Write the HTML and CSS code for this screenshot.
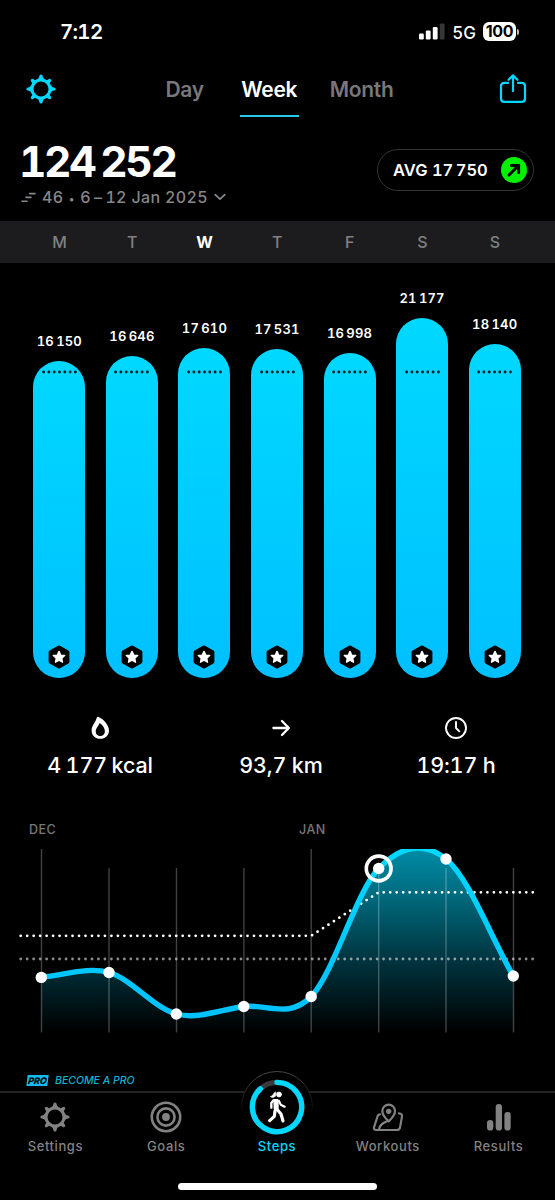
FILE: index.html
```html
<!DOCTYPE html>
<html lang="en">
<head>
<meta charset="utf-8">
<title>Steps</title>
<link rel="stylesheet" href="styles.css">
</head>

<body>

<!-- shared icons -->
<svg class="defs" width="0" height="0">
	<symbol id="gear" viewBox="-15 -15 30 30">
		<circle r="9" fill="none" stroke="currentColor" stroke-width="3"/>
		<g fill="currentColor">
			<path id="tooth" d="M-4.4-9.3Q-1.7-10.6-1.6-13A1.6 1.6 0 0 1 1.6-13Q1.7-10.6 4.4-9.3Z"/>
			<use href="#tooth" transform="rotate(45) translate(0 .8)"/>
			<use href="#tooth" transform="rotate(90)"/>
			<use href="#tooth" transform="rotate(135) translate(0 .8)"/>
			<use href="#tooth" transform="rotate(180)"/>
			<use href="#tooth" transform="rotate(225) translate(0 .8)"/>
			<use href="#tooth" transform="rotate(270)"/>
			<use href="#tooth" transform="rotate(315) translate(0 .8)"/>
		</g>
	</symbol>
	<symbol id="star" viewBox="0 0 22 24">
		<path d="M11 2.5L19.4 7.2V16.8L11 21.5L2.6 16.8V7.2Z" fill="#000" stroke="#000" stroke-width="4" stroke-linejoin="round"/>
		<path d="M11 6.4L12.7 10.1L16.7 10.5L13.7 13.2L14.5 17.2L11 15.2L7.5 17.2L8.3 13.2L5.3 10.5L9.3 10.1Z" fill="#fff" stroke="#fff" stroke-width="1.4" stroke-linejoin="round"/>
	</symbol>
	<symbol id="goal" viewBox="0 0 35 4">
		<path d="M1.6 2H34" fill="none" stroke="#02202b" stroke-width="2.9" stroke-linecap="round" stroke-dasharray="0 5.3"/>
	</symbol>
</svg>

<div class="status">
	<span class="clock">7:12</span>
	<div class="signal">
		<svg width="26" height="17" fill="#fff">
			<rect x="0" y="10.5" width="4.8" height="6" rx="1.2"/>
			<rect x="6.8" y="7.5" width="4.8" height="9" rx="1.2"/>
			<rect x="13.8" y="4" width="4.8" height="12.5" rx="1.2"/>
			<rect x="20.8" y="0.5" width="4.8" height="16" rx="1.2" fill="#363636"/>
		</svg>
		<span class="net">5G</span>
		<span class="battery">100</span>
		<i class="nub"></i>
	</div>
</div>

<div class="header">
	<svg class="blue" width="30" height="30"><use href="#gear"/></svg>
	<div class="tabs">
		<a class="tab day">Day</a>
		<a class="tab week active">Week</a>
		<a class="tab month">Month</a>
	</div>
	<svg class="blue" width="28" height="30" viewBox="0 0 28 30" fill="none" stroke="currentColor" stroke-width="2.2" stroke-linecap="round" stroke-linejoin="round">
		<path d="M9 8.9H5.4Q2 8.9 2 12.3V24.4Q2 27.8 5.4 27.8H22.6Q26 27.8 26 24.4V12.3Q26 8.9 22.6 8.9H19"/>
		<path d="M14 17V2M9.6 5.8L14 1.4L18.4 5.8"/>
	</svg>
</div>

<div class="summary">
	<div>
		<h1>124 252</h1>
		<div class="range">
			<svg width="15" height="11" viewBox="0 0 15 11" fill="none" stroke="currentColor" stroke-width="1.6" stroke-linecap="round"><path d="M8.6 1.6H14M5 5.4H10M1 9.2H6"/></svg>
			<span>46 <b>•</b> 6<i>–</i>12 Jan 2025</span>
			<svg width="12" height="8" viewBox="0 0 12 8" fill="none" stroke="currentColor" stroke-width="1.8" stroke-linecap="round" stroke-linejoin="round"><path d="M1.2 1.6L6 6.2L10.8 1.6"/></svg>
		</div>
	</div>
	<div class="avg">
		<span>AVG <em>17 750</em></span>
		<svg width="26" height="26" viewBox="0 0 26 26">
			<circle cx="13" cy="13" r="13" fill="#00f000"/>
			<path d="M8 18L17 9M10.4 8.6H17.6V15.6" fill="none" stroke="#000" stroke-width="3" stroke-linecap="round"/>
		</svg>
	</div>
</div>

<div class="days">
	<span>M</span><span>T</span><span class="today">W</span><span>T</span><span>F</span><span>S</span><span>S</span>
</div>

<div class="bars">
	<div class="col"><span>16 150</span><div class="bar" style="height: 317.5px"><svg class="goal"><use href="#goal"/></svg><svg class="star"><use href="#star"/></svg></div></div>
	<div class="col"><span>16 646</span><div class="bar" style="height: 322px"><svg class="goal"><use href="#goal"/></svg><svg class="star"><use href="#star"/></svg></div></div>
	<div class="col"><span>17 610</span><div class="bar" style="height: 330px"><svg class="goal"><use href="#goal"/></svg><svg class="star"><use href="#star"/></svg></div></div>
	<div class="col"><span>17 531</span><div class="bar" style="height: 329px"><svg class="goal"><use href="#goal"/></svg><svg class="star"><use href="#star"/></svg></div></div>
	<div class="col"><span>16 998</span><div class="bar" style="height: 325px"><svg class="goal"><use href="#goal"/></svg><svg class="star"><use href="#star"/></svg></div></div>
	<div class="col"><span>21 177</span><div class="bar" style="height: 360.5px"><svg class="goal"><use href="#goal"/></svg><svg class="star"><use href="#star"/></svg></div></div>
	<div class="col"><span>18 140</span><div class="bar" style="height: 334.5px"><svg class="goal"><use href="#goal"/></svg><svg class="star"><use href="#star"/></svg></div></div>
</div>

<div class="stats">
	<div class="stat">
		<svg width="24" height="24" viewBox="0 0 24 24"><path fill="#fff" fill-rule="evenodd" d="M10.6 .9C15 2.8 21 8.5 21 14.5C21 19.5 17.2 22.8 12.3 22.8C7.3 22.8 3.6 19.4 3.6 14.4C3.6 9.8 7.2 7 8.6 2.3C9 1 9.5 .5 10.6 .9ZM11.5 7C10.6 10.3 7.7 12.1 7.7 15.5C7.7 18.3 9.7 20.1 12.3 20.1C14.9 20.1 16.9 18.2 16.9 15.5C16.9 11.9 14.3 8.9 11.5 7Z"/></svg>
		<span class="kcal">4 177 kcal</span>
	</div>
	<div class="stat">
		<svg width="24" height="24" viewBox="0 0 24 24" fill="none" stroke="#fff" stroke-width="2.3" stroke-linecap="round" stroke-linejoin="round"><path d="M4.4 12H19.6M13 5L19.8 12L13 19"/></svg>
		<span>93,7 km</span>
	</div>
	<div class="stat">
		<svg width="24" height="24" viewBox="0 0 24 24" fill="none" stroke="#fff" stroke-width="1.9" stroke-linecap="round" stroke-linejoin="round"><circle cx="12" cy="12" r="10"/><path d="M12 6V12L15.3 15.3"/></svg>
		<span>19:17 h</span>
	</div>
</div>

<div class="trend">
	<svg width="555" height="240" viewBox="0 0 555 240" fill="none">
		<defs>
			<linearGradient id="area" gradientUnits="userSpaceOnUse" x1="0" y1="39" x2="0" y2="222">
				<stop offset="0" stop-color="#008ca6"/>
				<stop offset=".25" stop-color="#006b7e"/>
				<stop offset=".6" stop-color="#003540"/>
				<stop offset="1" stop-color="#000"/>
			</linearGradient>
			<linearGradient id="line" gradientUnits="userSpaceOnUse" x1="0" y1="39" x2="0" y2="222">
				<stop offset="0" stop-color="#00d8ff"/>
				<stop offset="1" stop-color="#00bfff"/>
			</linearGradient>
			<clipPath id="plot"><rect x="0" y="39" width="555" height="184"/></clipPath>
		</defs>
		<text class="month-label" x="29" y="24">DEC</text>
		<text class="month-label" x="299" y="24">JAN</text>
		<path clip-path="url(#plot)" fill="url(#area)" d="M41.3 167C63.8 165.5 86.5 156.3 109 162.5C131.4 168.7 153.9 198.3 176.3 204C198.8 209.7 221.3 199.4 243.8 196.5C266.3 193.6 288.7 209.5 311.2 186.5C333.7 163.5 356.2 81.4 378.7 58.5C401.2 35.6 423.6 31.1 446 49C468.4 66.9 490.9 127 513.3 166V222H41.3Z"/>
		<path stroke="#fff" stroke-opacity=".25" stroke-width="1.4" d="M41.5 39V222.5M109 58V222.5M176.5 58V222.5M243.9 58V222.5M311.2 39V222.5M378.7 58V222.5M446 58V222.5M513.5 58V222.5"/>
		<path stroke="#fff" stroke-width="2.8" stroke-linecap="round" stroke-dasharray="0 6.48" d="M20.7 125.8H311.2L378.7 82.3H535"/>
		<path stroke="#fff" stroke-opacity=".55" stroke-width="2.8" stroke-linecap="round" stroke-dasharray="0 6.48" d="M20.7 149H535"/>
		<path clip-path="url(#plot)" stroke="url(#line)" stroke-width="5.4" d="M41.3 167C63.8 165.5 86.5 156.3 109 162.5C131.4 168.7 153.9 198.3 176.3 204C198.8 209.7 221.3 199.4 243.8 196.5C266.3 193.6 288.7 209.5 311.2 186.5C333.7 163.5 356.2 81.4 378.7 58.5C401.2 35.6 423.6 31.1 446 49C468.4 66.9 490.9 127 513.3 166"/>
		<g fill="#fff">
			<circle cx="41.3" cy="167.4" r="5.7"/>
			<circle cx="109" cy="162.5" r="5.7"/>
			<circle cx="176.3" cy="204" r="5.7"/>
			<circle cx="243.8" cy="196.5" r="5.7"/>
			<circle cx="311.2" cy="186.5" r="5.7"/>
			<circle cx="378.7" cy="58.5" r="5.7"/>
			<circle cx="446" cy="49" r="5.7"/>
			<circle cx="513.3" cy="166" r="5.7"/>
		</g>
		<circle cx="378.7" cy="58.5" r="12.4" stroke="#fff" stroke-width="3.6"/>
	</svg>
</div>

<div class="pro">
	<span class="badge">PRO</span>
	<span>BECOME A PRO</span>
</div>

<div class="nav">
	<a>
		<svg width="30" height="30"><use href="#gear"/></svg>
		<span>Settings</span>
	</a>
	<a>
		<svg width="32" height="32" viewBox="-16 -16 32 32" fill="none" stroke="currentColor" stroke-width="2.6">
			<circle r="14.2"/><circle r="8.6"/><circle r="3.9" fill="currentColor" stroke="none"/>
		</svg>
		<span>Goals</span>
	</a>
	<a class="active">
		<svg class="steps" width="72" height="72" viewBox="33 31 216 216" fill="none">
			<defs>
				<linearGradient id="fade" x1="0" y1="0" x2="0" y2="1">
					<stop offset="0" stop-color="#4a4648"/>
					<stop offset=".6" stop-color="#000"/>
				</linearGradient>
			</defs>
			<circle cx="141" cy="139" r="106.5" fill="#000" stroke="url(#fade)" stroke-width="3"/>
			<circle cx="141" cy="139" r="74" stroke="#3a3a3c" stroke-width="16"/>
			<path d="M141 65A74 74 0 1 1 91 84.5" stroke="currentColor" stroke-width="16" stroke-linecap="round"/>
			<g stroke="#fff" stroke-linecap="round" stroke-linejoin="round">
				<circle cx="147" cy="101.5" r="7.5" fill="#fff" stroke-width="2"/>
				<path d="M136 94Q132 96 129 102Q126 107 121 108Q130 113 136 107L138 100Z" fill="#fff" stroke-width="2"/>
				<path d="M134 119L142 119L142 145L135 145Z" fill="#fff" stroke-width="8"/>
				<path d="M130 119L124 127V141" stroke-width="7"/>
				<path d="M147 121L152 132L164 138" stroke-width="6.5"/>
				<path d="M142 147L153 160L159 181" stroke-width="9.5"/>
				<path d="M135 151L133 167L119 180" stroke-width="9.5"/>
			</g>
		</svg>
		<span>Steps</span>
	</a>
	<a>
		<svg width="32" height="30" viewBox="427 124 96 90" fill="none" stroke="currentColor" stroke-width="6.5" stroke-linecap="round" stroke-linejoin="round">
			<path d="M477 182C467 173 458 162 458 151A19 19 0 0 1 496 151C496 162 487 173 477 182Z"/>
			<circle cx="477" cy="152" r="8" fill="currentColor" stroke="none"/>
			<path d="M451 161Q446 161 444 166L433 200Q431 208 440 208H502Q509 208 511 201L517 167Q518 159 508 158M448 206C450 192 461 187 472 182"/>
		</svg>
		<span>Workouts</span>
	</a>
	<a>
		<svg width="24" height="28" viewBox="0 0 24 28" fill="currentColor">
			<rect x="0" y="17" width="6.3" height="10.5" rx="3.1"/>
			<rect x="8.7" y="1" width="6.3" height="26.5" rx="3.1"/>
			<rect x="17.4" y="9" width="6.3" height="18.5" rx="3.1"/>
		</svg>
		<span>Results</span>
	</a>
</div>

<div class="home"></div>

</body>
</html>
```

FILE: styles.css
```css
* {
	margin: 0;
	padding: 0;
	box-sizing: border-box;
}

body {
	width: 555px;
	height: 1200px;
	overflow: hidden;
	background: #000;
	color: #fff;
	font-family: Inter, "Liberation Sans", sans-serif;
	font-variant-numeric: tabular-nums;
}

svg {
	display: block;
	flex: none;
}

.defs {
	height: 0;
}

.blue {
	color: #00d8ff;
}

/* status bar */

.status {
	display: flex;
	justify-content: space-between;
	align-items: center;
	height: 63px;
	padding: 0 36px 0 60px;
}

.clock {
	font-size: 20.5px;
	font-weight: 600;
	letter-spacing: -0.7px;
}

.signal {
	display: flex;
	align-items: center;
}

.net {
	margin: 2px 7px 0 7px;
	font-size: 17px;
	font-weight: 500;
	line-height: 18px;
}

.battery {
	width: 33px;
	height: 19px;
	border-radius: 6px;
	background: #fff;
	color: #000;
	font-size: 16px;
	font-weight: 700;
	line-height: 19px;
	text-align: center;
	font-variant-numeric: normal;
	letter-spacing: -0.3px;
}

.nub {
	width: 2px;
	height: 6px;
	margin-left: 1px;
	border-radius: 0 2px 2px 0;
	background: #bbb;
}

/* header */

.header {
	display: flex;
	justify-content: space-between;
	align-items: center;
	height: 54px;
	padding: 0 28px 3px 26px;
}

.tabs {
	display: flex;
	align-items: center;
	margin-left: 4px;
	font-size: 21px;
	font-weight: 600;
	line-height: 54px;
	letter-spacing: -0.3px;
	color: #78787c;
}

.tab {
	height: 54px;
	margin-top: 3px;
	text-align: center;
}

.tab.week {
	width: 59px;
	margin: 3px 31px 0 36px;
	border-bottom: 2px solid #28c8ea;
	color: #fff;
}

/* summary */

.summary {
	display: flex;
	justify-content: space-between;
	height: 104px;
	padding: 22px 21px 0 20px;
}

h1 {
	height: 46px;
	margin-left: -1px;
	font-size: 42.5px;
	font-weight: 700;
	line-height: 46px;
	letter-spacing: -2.4px;
	word-spacing: -3px;
}

.range {
	display: flex;
	align-items: center;
	gap: 6px;
	height: 20px;
	margin-top: 2px;
	padding-left: 1px;
	font-size: 16px;
	font-weight: 500;
	letter-spacing: 0.35px;
	color: #86868a;
	white-space: pre;
}

.range b {
	margin: 0 1px;
	font-size: 11px;
}

.range i {
	margin: 0 3px;
	font-style: normal;
}

.avg {
	display: flex;
	justify-content: space-between;
	align-items: center;
	width: 157px;
	height: 42px;
	margin-top: 10px;
	padding: 0 6px 0 15px;
	border: 1px solid #343436;
	border-radius: 21px;
	font-size: 16.5px;
	font-weight: 600;
	white-space: nowrap;
}

.avg em {
	font-style: normal;
	word-spacing: -2px;
}

/* week chart */

.days {
	display: grid;
	grid-template-columns: repeat(7, 72.55px);
	height: 42px;
	padding-left: 23.3px;
	background: #1c1c1e;
	color: #818185;
	font-size: 16px;
	font-weight: 500;
	line-height: 43px;
	text-align: center;
}

.today {
	color: #fff;
	font-weight: 700;
}

.bars {
	display: grid;
	grid-template-columns: repeat(7, 72.55px);
	height: 415px;
	padding-left: 23.1px;
}

.col {
	display: flex;
	flex-direction: column;
	justify-content: flex-end;
	align-items: center;
	font-size: 13px;
	font-weight: 600;
	letter-spacing: 0.2px;
	word-spacing: -1.5px;
}

.col span {
	height: 16px;
	margin-bottom: 12px;
	line-height: 16px;
}

.bar {
	position: relative;
	width: 52px;
	border-radius: 26px;
	background: linear-gradient(#00d8ff, #00c0ff);
}

.goal {
	position: absolute;
	bottom: 304.5px;
	left: 8.5px;
	width: 35px;
	height: 4px;
}

.star {
	position: absolute;
	bottom: 9.5px;
	left: 15px;
	width: 22px;
	height: 24px;
}

/* totals */

.stats {
	display: grid;
	grid-template-columns: 200px 162px 188px;
	height: 132px;
	padding-top: 38px;
}

.stat {
	display: flex;
	flex-direction: column;
	align-items: center;
	gap: 10px;
	font-size: 21.5px;
	font-weight: 500;
	line-height: 30px;
	letter-spacing: -0.15px;
}

.kcal {
	word-spacing: -1px;
}

/* trend */

.trend {
	height: 259px;
}

.month-label {
	fill: #77777b;
	font-size: 12.5px;
	font-weight: 500;
	letter-spacing: 0.5px;
}

.pro {
	display: flex;
	align-items: center;
	gap: 7px;
	height: 22px;
	padding-left: 27px;
	color: #12b3d6;
	font-size: 10.5px;
	font-style: italic;
	font-weight: 500;
}

.badge {
	width: 21px;
	height: 11px;
	background: #14baf0;
	color: #000;
	font-size: 9px;
	font-weight: 800;
	line-height: 11px;
	text-align: center;
	transform: skewX(-7deg);
}

/* bottom bar */

.nav {
	display: grid;
	grid-template-columns: repeat(5, 110.8px);
	height: 92px;
	border-top: 2px solid #232323;
	color: #828282;
	font-size: 13px;
	font-weight: 500;
	letter-spacing: 0.6px;
}

.nav a {
	display: flex;
	flex-direction: column;
	align-items: center;
	height: 62px;
	padding-top: 3px;
}

.nav a svg {
	margin: auto 0;
}

.nav a span {
	height: 18px;
	line-height: 18px;
}

.nav a.active {
	color: #00d8ff;
}

.nav a .steps {
	margin: -25px 0 -6px;
}

.home {
	width: 199px;
	height: 7px;
	margin-left: 178px;
	border-radius: 4px;
	background: #fff;
}
```
